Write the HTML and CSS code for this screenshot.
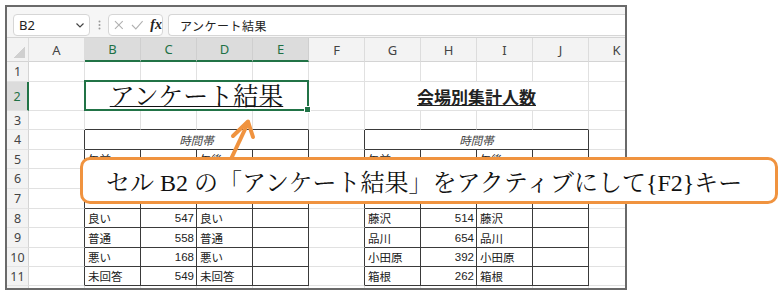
FILE: index.html
```html
<!DOCTYPE html>
<html lang="ja">
<head>
    <meta charset="UTF-8">
    <meta name="viewport" content="width=device-width, initial-scale=1.0">
    <title>アンケート結果</title>
    <link rel="stylesheet" href="styles.css">
</head>
<body>
<div class="page">
    <div class="window">
        <div class="toolbar">
            <div class="namebox">
                <span>B2</span>
                <svg class="chev" width="8" height="5" viewBox="0 0 8 5"><polyline points="0.5,0.5 4,4 7.5,0.5" fill="none" stroke="#444" stroke-width="1.2"/></svg>
            </div>
            <svg class="dots" width="3" height="10" viewBox="0 0 3 10"><circle cx="1.5" cy="1.5" r="1" fill="#999"/><circle cx="1.5" cy="5" r="1" fill="#999"/><circle cx="1.5" cy="8.5" r="1" fill="#999"/></svg>
            <div class="fxbox">
                <svg width="10" height="10" viewBox="0 0 10 10"><path d="M1 1 L9 9 M9 1 L1 9" stroke="#b0b0b0" stroke-width="1.1"/></svg>
                <svg width="13" height="10" viewBox="0 0 13 10"><polyline points="1,5 5,9 12,1" fill="none" stroke="#b0b0b0" stroke-width="1.1"/></svg>
                <span class="fx">fx</span>
            </div>
            <div class="formula">アンケート結果</div>
        </div>

        <div class="sheet">
            <div class="row head">
                <div class="corner"><span class="tri"></span></div>
                <div class="ch">A</div>
                <div class="ch on">B</div>
                <div class="ch on">C</div>
                <div class="ch on">D</div>
                <div class="ch on">E</div>
                <div class="ch">F</div>
                <div class="ch">G</div>
                <div class="ch">H</div>
                <div class="ch">I</div>
                <div class="ch">J</div>
                <div class="ch">K</div>
            </div>

            <div class="row">
                <div class="rh">1</div>
                <div class="c"></div><div class="c"></div><div class="c"></div><div class="c"></div><div class="c"></div><div class="c"></div>
                <div class="c"></div><div class="c"></div><div class="c"></div><div class="c"></div><div class="c"></div>
            </div>

            <div class="row tall">
                <div class="rh on">2</div>
                <div class="c"></div>
                <div class="c m4 active"><span class="title1">アンケート結果</span></div>
                <div class="c"></div>
                <div class="c m4 bottom"><span class="title2">会場別集計人数</span></div>
                <div class="c"></div>
            </div>

            <div class="row s">
                <div class="rh">3</div>
                <div class="c"></div>
                <div class="c ab"></div><div class="c ab"></div><div class="c ab"></div><div class="c ab"></div>
                <div class="c"></div>
                <div class="c ab"></div><div class="c ab"></div><div class="c ab"></div><div class="c ab"></div>
                <div class="c"></div>
            </div>

            <div class="row">
                <div class="rh">4</div>
                <div class="c lb"></div>
                <div class="c m4 tb hd">時間帯</div>
                <div class="c lb"></div>
                <div class="c m4 tb hd">時間帯</div>
                <div class="c"></div>
            </div>

            <div class="row s">
                <div class="rh">5</div>
                <div class="c lb"></div>
                <div class="c tb">午前</div><div class="c tb"></div><div class="c tb">午後</div><div class="c tb"></div>
                <div class="c lb"></div>
                <div class="c tb">午前</div><div class="c tb"></div><div class="c tb">午後</div><div class="c tb"></div>
                <div class="c"></div>
            </div>

            <!-- 6・7行目の表の中身は吹き出しの下に隠れる -->
            <div class="row">
                <div class="rh">6</div>
                <div class="c lb"></div>
                <div class="c tb"></div><div class="c tb"></div><div class="c tb"></div><div class="c tb"></div>
                <div class="c lb"></div>
                <div class="c tb"></div><div class="c tb"></div><div class="c tb"></div><div class="c tb"></div>
                <div class="c"></div>
            </div>

            <div class="row">
                <div class="rh">7</div>
                <div class="c lb"></div>
                <div class="c tb"></div><div class="c tb"></div><div class="c tb"></div><div class="c tb"></div>
                <div class="c lb"></div>
                <div class="c tb"></div><div class="c tb"></div><div class="c tb"></div><div class="c tb"></div>
                <div class="c"></div>
            </div>

            <div class="row s">
                <div class="rh">8</div>
                <div class="c lb"></div>
                <div class="c tb">良い</div><div class="c tb n">547</div><div class="c tb">良い</div><div class="c tb"></div>
                <div class="c lb"></div>
                <div class="c tb">藤沢</div><div class="c tb n">514</div><div class="c tb">藤沢</div><div class="c tb"></div>
                <div class="c"></div>
            </div>

            <div class="row">
                <div class="rh">9</div>
                <div class="c lb"></div>
                <div class="c tb">普通</div><div class="c tb n">558</div><div class="c tb">普通</div><div class="c tb"></div>
                <div class="c lb"></div>
                <div class="c tb">品川</div><div class="c tb n">654</div><div class="c tb">品川</div><div class="c tb"></div>
                <div class="c"></div>
            </div>

            <div class="row s">
                <div class="rh">10</div>
                <div class="c lb"></div>
                <div class="c tb">悪い</div><div class="c tb n">168</div><div class="c tb">悪い</div><div class="c tb"></div>
                <div class="c lb"></div>
                <div class="c tb">小田原</div><div class="c tb n">392</div><div class="c tb">小田原</div><div class="c tb"></div>
                <div class="c"></div>
            </div>

            <div class="row s">
                <div class="rh">11</div>
                <div class="c lb"></div>
                <div class="c tb">未回答</div><div class="c tb n">549</div><div class="c tb">未回答</div><div class="c tb"></div>
                <div class="c lb"></div>
                <div class="c tb">箱根</div><div class="c tb n">262</div><div class="c tb">箱根</div><div class="c tb"></div>
                <div class="c"></div>
            </div>

            <div class="row">
                <div class="rh"></div>
                <div class="c"></div><div class="c"></div><div class="c"></div><div class="c"></div><div class="c"></div><div class="c"></div>
                <div class="c"></div><div class="c"></div><div class="c"></div><div class="c"></div><div class="c"></div>
            </div>
        </div>
    </div>

    <!-- 吹き出し -->
    <div class="callout">セル B2 の「アンケート結果」をアクティブにして{F2}キー</div>
    <svg class="arrow" width="782" height="294" viewBox="0 0 782 294">
        <path d="M231 159 L248 123" fill="none" stroke="#f0933f" stroke-width="4"/>
        <path d="M233 136 L248 121.5 L253 137" fill="none" stroke="#f0933f" stroke-width="4" stroke-linejoin="round" stroke-linecap="round"/>
    </svg>
</div>
</body>
</html>
```

FILE: styles.css
```css
body {
    margin: 0;
    background: #fff;
}
.page {
    position: relative;
    width: 782px;
    height: 294px;
    padding: 5px 0 0 5px;
    box-sizing: border-box;
}
.window {
    width: 622px;
    height: 285px;
    border: 2px solid #6a6a6a;
    box-sizing: border-box;
    overflow: hidden;
    font-family: "Noto Sans", "Noto Sans CJK JP", sans-serif;
}

/* 数式バー */
.toolbar {
    display: flex;
    align-items: flex-end;
    height: 31px;
    padding: 0 0 1px 6px;
    box-sizing: border-box;
    background: #f6f6f6;
    border-bottom: 1px solid #d4d4d4;
}
.namebox {
    display: flex;
    align-items: center;
    justify-content: space-between;
    width: 77px;
    height: 22px;
    padding: 0 5px 0 5px;
    box-sizing: border-box;
    background: #fff;
    border: 1px solid #d6d6d6;
    border-radius: 4px;
    font-size: 13px;
    color: #222;
}
.dots {
    margin: 0 7px 6px 8px;
}
.fxbox {
    display: flex;
    align-items: center;
    gap: 7px;
    width: 55px;
    height: 22px;
    padding-left: 5px;
    box-sizing: border-box;
    background: #fff;
    border: 1px solid #d6d6d6;
    border-radius: 4px;
}
.fx {
    font-family: "Liberation Serif", serif;
    font-style: italic;
    font-weight: bold;
    font-size: 14px;
    color: #222;
}
.formula {
    flex: 1;
    display: flex;
    align-items: center;
    height: 22px;
    margin-left: 5px;
    padding-left: 11px;
    box-sizing: border-box;
    background: #fff;
    border: 1px solid #d6d6d6;
    border-right: none;
    border-radius: 4px 0 0 4px;
    font-family: "Noto Sans CJK JP", sans-serif;
    font-size: 12px;
    letter-spacing: 0.5px;
    color: #222;
}

/* シート */
.row {
    display: flex;
    height: 20px;
}
.row.s {
    height: 19px;
}
.row.tall {
    height: 29px;
}
.row.head {
    height: 24px;
}
.corner, .ch, .rh {
    flex: none;
    box-sizing: border-box;
    background: #f3f3f3;
    color: #444;
    display: flex;
    align-items: center;
    justify-content: center;
}
.corner {
    width: 22px;
    position: relative;
    border-right: 1px solid #dcdcdc;
    border-bottom: 1px solid #d4d4d4;
}
.tri {
    position: absolute;
    right: 3px;
    bottom: 3px;
    width: 11px;
    height: 11px;
    background: linear-gradient(to bottom right, transparent 50%, #d0d0d0 50%);
}
.ch {
    width: 56px;
    font-size: 13px;
    border-right: 1px solid #dcdcdc;
    border-bottom: 1px solid #d4d4d4;
}
.ch.on {
    background: #dcdcdc;
    color: #1e7145;
    border-bottom: 2px solid #217346;
    border-right-color: #cfcfcf;
}
.rh {
    width: 22px;
    font-size: 12.5px;
    border-right: 1px solid #d4d4d4;
    border-bottom: 1px solid #e3e3e3;
}
.rh.on {
    background: #dcdcdc;
    color: #1e7145;
    border-right: 2px solid #217346;
}
.c {
    flex: none;
    width: 56px;
    box-sizing: border-box;
    border-right: 1px solid #e1e1e1;
    border-bottom: 1px solid #e1e1e1;
    padding: 0 3px;
    display: flex;
    align-items: center;
    white-space: nowrap;
    overflow: hidden;
    font-family: "Liberation Sans", "Noto Sans CJK JP", sans-serif;
    font-size: 11.5px;
    color: #222;
}
.c.m4 {
    width: 224px;
    justify-content: center;
}
.c.n {
    justify-content: flex-end;
    padding-right: 2px;
}
.c.tb {
    border-right-color: #3a3a3a;
    border-bottom-color: #3a3a3a;
}
.c.lb {
    border-right-color: #3a3a3a;
}
.c.ab {
    border-bottom-color: #3a3a3a;
}
.c.hd {
    font-style: italic;
    color: #444;
}
.c.bottom {
    align-items: flex-end;
    padding-bottom: 3px;
}
.c.active {
    position: relative;
    overflow: visible;
    align-items: flex-end;
    padding-bottom: 0;
}
.c.active::after {
    content: "";
    position: absolute;
    top: -2px;
    left: -1px;
    right: -1px;
    bottom: -1px;
    border: 2px solid #217346;
}
.c.active::before {
    content: "";
    position: absolute;
    right: -3px;
    bottom: -3px;
    width: 5px;
    height: 5px;
    background: #217346;
    border: 1px solid #fff;
    z-index: 1;
}
.title1 {
    font-family: "Liberation Serif", "Noto Serif CJK JP", "Noto Sans CJK JP", serif;
    font-size: 25px;
    line-height: 27px;
    text-decoration: underline;
    text-decoration-thickness: 1px;
    text-underline-offset: 1px;
    color: #111;
}
.title2 {
    font-family: "Noto Sans CJK JP", sans-serif;
    font-weight: bold;
    font-size: 17px;
    line-height: 20px;
    text-decoration: underline;
    text-underline-offset: 1px;
    color: #222;
}

/* 吹き出し */
.callout {
    position: absolute;
    left: 80px;
    top: 157px;
    width: 698px;
    height: 47px;
    box-sizing: border-box;
    border: 3px solid #f0933f;
    border-radius: 10px;
    background: #fff;
    padding-left: 23px;
    display: flex;
    align-items: center;
    font-family: "Liberation Serif", "Noto Serif CJK JP", "Noto Sans CJK JP", serif;
    font-size: 24px;
    color: #111;
    white-space: nowrap;
}
.arrow {
    position: absolute;
    left: 0;
    top: 0;
    pointer-events: none;
}
```
